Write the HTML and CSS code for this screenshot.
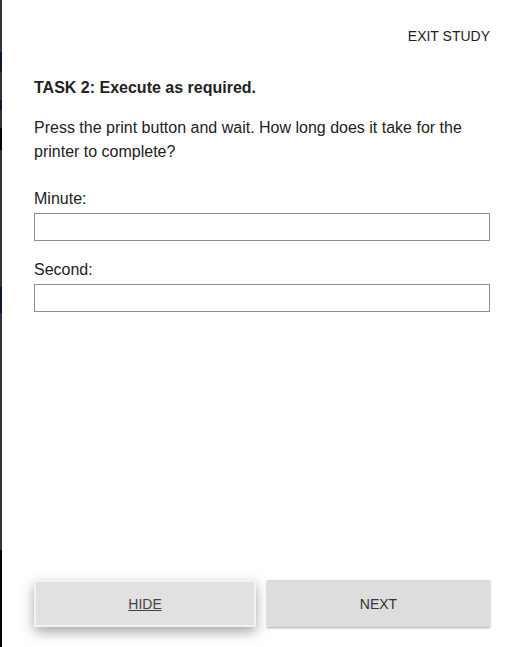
FILE: index.html
```html
<!DOCTYPE html>
<html>
<head>
<meta charset="utf-8">
<link rel="stylesheet" href="styles.css">
</head>
<body>
<div class="frame">
  <div class="edge">
    <div class="seg s1"></div>
    <div class="seg s2"></div>
    <div class="seg s3"></div>
    <div class="seg s4"></div>
    <div class="seg s5"></div>
  </div>
  <div class="panel">
    <div class="topbar"><a class="exit">EXIT STUDY</a></div>
    <div class="content">
      <h2 class="title">TASK 2: Execute as required.</h2>
      <p class="desc">Press the print button and wait. How long does it take for the printer to complete?</p>
      <label class="label">Minute:</label>
      <input class="field" type="text">
      <label class="label">Second:</label>
      <input class="field" type="text">
    </div>
    <div class="actions">
      <button class="btn hide">HIDE</button>
      <button class="btn next">NEXT</button>
    </div>
  </div>
</div>
</body>
</html>
```

FILE: styles.css
```css
html, body {
  margin: 0;
  padding: 0;
  background: #ffffff;
}
.frame {
  display: flex;
  height: 647px;
  width: 520px;
  overflow: hidden;
  font-family: "Liberation Sans", Arial, sans-serif;
  color: #222;
}
.edge {
  width: 2px;
  background: #333333;
  display: flex;
  flex-direction: column;
  flex-shrink: 0;
}
.seg { flex-shrink: 0; }
.s1 { margin-top: 52px; height: 20px; background: #0d1a33; }
.s2 { margin-top: 28px; height: 10px; background: #101c35; }
.s3 { margin-top: 18px; height: 22px; background: #050505; }
.s4 { margin-top: 137px; height: 26px; background: #0b1a38; }
.s5 { margin-top: 237px; height: 100px; background: #000000; }
.panel {
  flex: 1;
  display: flex;
  flex-direction: column;
  padding: 0 30px 20px 32px;
}
.topbar {
  display: flex;
  justify-content: flex-end;
  padding-top: 28px;
}
.exit {
  font-size: 14px;
  line-height: 16px;
  color: #222;
}
.content {
  display: flex;
  flex-direction: column;
  padding-top: 35px;
}
.title {
  margin: 0;
  font-size: 16px;
  line-height: 18px;
  font-weight: bold;
  color: #222;
}
.desc {
  margin: 19px 0 0;
  font-size: 16px;
  line-height: 24px;
  color: #222;
}
.label {
  display: block;
  margin-top: 26px;
  font-size: 16px;
  line-height: 18px;
  color: #222;
}
.field {
  display: block;
  box-sizing: border-box;
  width: 100%;
  height: 28px;
  margin: 5px 0 0;
  border: 1px solid #8f8f8f;
  background: #fff;
  padding: 0 4px;
}
.field + .label { margin-top: 20px; }
.actions {
  margin-top: auto;
  display: flex;
  gap: 11px;
}
.btn {
  box-sizing: border-box;
  height: 47px;
  font-family: "Liberation Sans", Arial, sans-serif;
  font-size: 14px;
  color: #333;
  cursor: pointer;
}
.hide {
  width: 222px;
  flex-shrink: 0;
  background: #e1e1e1;
  border: 2px solid #f2f2f2;
  text-decoration: underline;
  color: #444;
  box-shadow: 0 5px 12px rgba(0, 0, 0, 0.35);
}
.next {
  flex: 1;
  background: #dddddd;
  border: none;
  box-shadow: 0 1px 2px rgba(0, 0, 0, 0.35);
}
```
